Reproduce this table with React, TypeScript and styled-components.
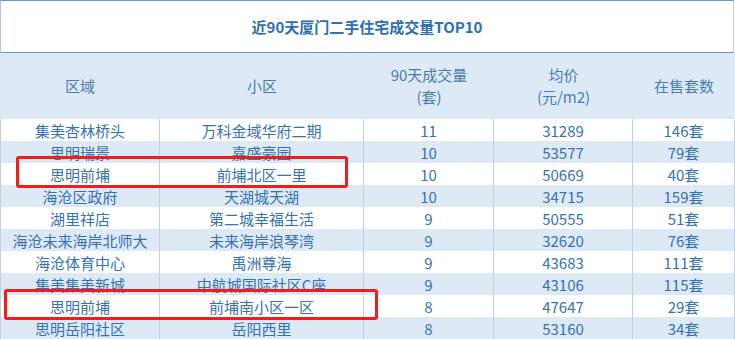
import React from "react";
import styled, { createGlobalStyle } from "styled-components";

const GlobalStyle = createGlobalStyle`
  body {
    margin: 0;
    background: #ffffff;
    font-family: "Noto Sans CJK SC", "Noto Sans", sans-serif;
  }
`;

const rows = [
  ["集美杏林桥头", "万科金域华府二期", "11", "31289", "146套"],
  ["思明瑞景", "嘉盛豪园", "10", "53577", "79套"],
  ["思明前埔", "前埔北区一里", "10", "50669", "40套"],
  ["海沧区政府", "天湖城天湖", "10", "34715", "159套"],
  ["湖里祥店", "第二城幸福生活", "9", "50555", "51套"],
  ["海沧未来海岸北师大", "未来海岸浪琴湾", "9", "32620", "76套"],
  ["海沧体育中心", "禹洲尊海", "9", "43683", "111套"],
  ["集美集美新城", "中航城国际社区C座", "9", "43106", "115套"],
  ["思明前埔", "前埔南小区一区", "8", "47647", "29套"],
  ["思明岳阳社区", "岳阳西里", "8", "53160", "34套"],
];

function App() {
  return (
    <>
      <GlobalStyle />
      <Wrapper>
        <Title>近90天厦门二手住宅成交量TOP10</Title>
        <Grid>
          <HeadCell>区域</HeadCell>
          <HeadCell>小区</HeadCell>
          <HeadCell>
            90天成交量
            <br />
            (套)
          </HeadCell>
          <HeadCell>
            均价
            <br />
            (元/m2)
          </HeadCell>
          <HeadCell>在售套数</HeadCell>
          {rows.map((r, i) =>
            r.map((c, j) => (
              <Cell key={i + "-" + j} $alt={i % 2 === 1} $first={j === 0}>
                {c}
              </Cell>
            ))
          )}
        </Grid>
        <Mark $left={16} $top={156} $width={332} $height={32} />
        <Mark $left={4} $top={289} $width={374} $height={31} />
      </Wrapper>
    </>
  );
}

const Wrapper = styled.div`
  position: relative;
  width: 735px;
  height: 339px;
  overflow: hidden;
`;

const Title = styled.div`
  box-sizing: border-box;
  width: 734px;
  height: 53px;
  border-top: 1px solid #5b9bd5;
  border-left: 1px solid #b9c3de;
  border-right: 1px solid #c6cede;
  border-bottom: 1px solid #5b9bd5;
  display: flex;
  align-items: center;
  justify-content: center;
  font-size: 15px;
  font-weight: bold;
  color: #2e6fb2;
`;

const Grid = styled.div`
  display: grid;
  grid-template-columns: 160px 204px 130px 139px 102px;
  grid-template-rows: 66px;
  grid-auto-rows: 22px;
  background: #dde9f5;
`;

const HeadCell = styled.div`
  display: flex;
  align-items: center;
  justify-content: center;
  text-align: center;
  font-size: 15px;
  line-height: 22px;
  color: #4a7cb4;
`;

const Cell = styled.div<{ $alt: boolean; $first: boolean }>`
  box-sizing: border-box;
  display: flex;
  align-items: center;
  justify-content: center;
  font-size: 15px;
  white-space: nowrap;
  color: #3472b5;
  background: ${(p) => (p.$alt ? "#dde9f5" : "#ffffff")};
  border-right: 1px solid #c5cde0;
  border-left: ${(p) => (p.$first ? "1px solid #c5cde0" : "none")};
`;

const Mark = styled.div<{ $left: number; $top: number; $width: number; $height: number }>`
  position: absolute;
  box-sizing: border-box;
  left: ${(p) => p.$left}px;
  top: ${(p) => p.$top}px;
  width: ${(p) => p.$width}px;
  height: ${(p) => p.$height}px;
  border: 3px solid #f01e1a;
  border-radius: 3px;
`;

export default App;
